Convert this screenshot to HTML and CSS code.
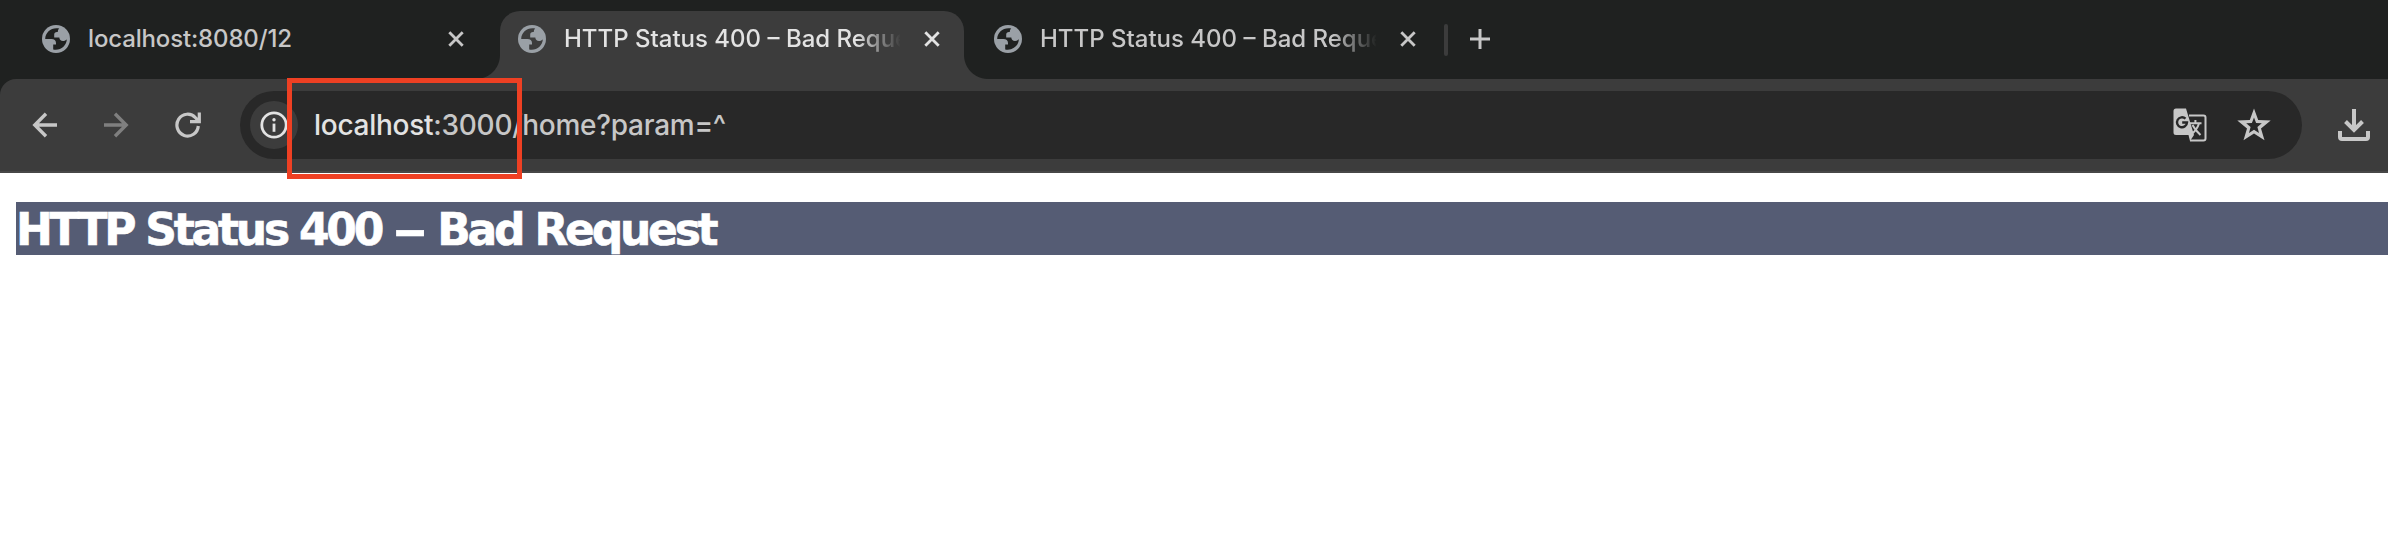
FILE: index.html
```html
<!DOCTYPE html>
<html lang="en">
<head>
<meta charset="utf-8">
<title>HTTP Status 400 – Bad Request</title>
<link rel="stylesheet" href="styles.css">
</head>
<body>
<svg class="defs" width="0" height="0">
  <symbol id="globe" viewBox="0 0 28 28">
    <circle cx="14" cy="14" r="14" fill="#9aa0a6"/>
    <path class="land" d="M14.5 3.2C8.300 3.200 3.300 7.800 3.200 14H9.500C12.200 14 14 15.500 14 18V19.500H11.200V24.400C18 26 24.800 20.800 24.800 14.200C23.900 15.400 22.500 16 21 16C18.800 16 17.500 14.800 17.300 12.600H12.200V9.800C12.200 8 13.200 7 15 7H15.800C15.800 5.600 16.200 4.400 17.200 3.600C16.400 3.300 15.400 3.200 14.500 3.200Z"/>
  </symbol>
  <symbol id="close" viewBox="0 0 16 16"><path d="M1.300 1.300L14.700 14.700M14.700 1.300L1.300 14.700" fill="none" stroke="currentColor" stroke-width="2.800"/></symbol>
</svg>
<div class="chrome">
<header class="tabs">
  <div class="tab first">
    <svg class="globe"><use href="#globe"/></svg>
    <span class="title">localhost:8080/12</span>
    <svg class="close"><use href="#close"/></svg>
  </div>
  <div class="tab active">
    <svg class="globe"><use href="#globe"/></svg>
    <span class="title fade">HTTP Status 400 – Bad Request</span>
    <svg class="close"><use href="#close"/></svg>
  </div>
  <div class="tab last">
    <svg class="globe"><use href="#globe"/></svg>
    <span class="title fade">HTTP Status 400 – Bad Request</span>
    <svg class="close"><use href="#close"/></svg>
  </div>
  <div class="divider"></div>
  <svg class="plus" viewBox="0 0 20 20"><path d="M10 0V20M0 10H20" stroke="currentColor" stroke-width="3"/></svg>
</header>
<nav class="toolbar">
  <svg class="nav-icon" viewBox="0 0 26 26"><path d="M25 13H3M14 1.800L2.800 13L14 24.200" fill="none" stroke="#c7c7c7" stroke-width="3.400"/></svg>
  <svg class="nav-icon forward" viewBox="0 0 26 26"><path d="M1 13H23M12 1.800L23.200 13L12 24.200" fill="none" stroke="#7f7f7f" stroke-width="3.400"/></svg>
  <svg class="nav-icon reload" viewBox="0 0 26 26"><path d="M23.300 14A10.700 10.900 0 1 1 20.500 5.700L23.500 9M24.300 .5V9.700H15" fill="none" stroke="#c7c7c7" stroke-width="3.200"/></svg>
  <div class="omnibox">
    <div class="info">
      <svg viewBox="0 0 28 28"><circle cx="14" cy="14" r="12.200" fill="none" stroke="#e3e3e3" stroke-width="2.800"/><path d="M14 12.600V20.800" stroke="#e3e3e3" stroke-width="2.800"/><circle cx="14" cy="8.700" r="1.700" fill="#e3e3e3"/></svg>
    </div>
    <div class="url"><span class="host">localhost</span>:3000/home?param=^</div>
    <svg class="translate" viewBox="0 0 34 34">
      <path d="M16 7.500H30.500Q32.500 7.500 32.500 9.500V30.500Q32.500 32.500 30.500 32.500H17" fill="none" stroke="#c7c7c7" stroke-width="2"/>
      <path d="M3 .5H13L21 27L17 33L15.500 27H3Q.5 27 .5 24.500V3Q.5 .5 3 .5Z" fill="#c7c7c7"/>
      <path d="M12.500 10.700A5 5 0 1 0 14 14.500H9.200" fill="none" stroke="#282828" stroke-width="2.400"/>
      <path d="M17 15.300H28.500M22.400 12V15M26 15.500Q24 22 18 26.500M19.500 17Q22 22 27.500 27" fill="none" stroke="#c7c7c7" stroke-width="2"/>
    </svg>
    <svg class="star" viewBox="0 0 34 34"><path fill-rule="evenodd" fill="#c7c7c7" d="M17 .5L21.200 12L33.700 12.500L24 20.500L27.500 32.300L17 25.500L6.500 32.300L10 20.500L.3 12.500L12.800 12ZM17 9.500L14.900 15L9.200 15.300L13.600 19L12 25L17 21.800L22 25L20.400 19L24.800 15.300L19.100 15Z"/></svg>
  </div>
  <svg class="download" viewBox="0 0 32 32"><path d="M16 0V20.500M7.500 12.500L16 21L24.500 12.500M2 22V28Q2 30 4 30H28Q30 30 30 28V22" fill="none" stroke="#c7c7c7" stroke-width="4"/></svg>
</nav>
</div>
<main class="page"><h1>HTTP Status 400 <span class="dash">–</span> Bad Request</h1></main>
<div class="highlight"></div>
</body>
</html>
```
FILE: styles.css
```css
* { box-sizing: border-box; }
body { margin: 0; width: 2388px; height: 556px; overflow: hidden; background: #fff; font-family: Inter, "Liberation Sans", sans-serif; }
svg { display: block; flex: none; }
.defs { position: absolute; }
.chrome { background: linear-gradient(#1f2120 120px, #3c3c3c 120px); }
.tabs { height: 79px; display: flex; align-items: flex-start; color: #c7c7c7; }
.tab { display: flex; align-items: center; height: 68px; margin-top: 11px; padding-bottom: 12px; }
.first { width: 500px; padding-left: 42px; }
.active { position: relative; width: 464px; padding-left: 18px; background: #3c3c3c; color: #e3e3e3; border-radius: 20px 20px 0 0; }
.active::before, .active::after { content: ""; position: absolute; bottom: 0; width: 24px; height: 24px; }
.active::before { right: 100%; background: radial-gradient(circle at 0 0, transparent 23.500px, #3c3c3c 24.500px); }
.active::after { left: 100%; background: radial-gradient(circle at 100% 0, transparent 23.500px, #3c3c3c 24.500px); }
.last { width: 480px; padding-left: 30px; }
.globe { width: 28px; height: 28px; }
.active .globe { --land: #3c3c3c; }
.land { fill: var(--land, #1f2120); }
.title { width: 336px; margin-left: 18px; font-size: 24px; font-weight: 450; line-height: 30px; white-space: nowrap; overflow: hidden; }
.first .title { letter-spacing: -.150px; }
.fade { -webkit-mask-image: linear-gradient(90deg, #000 292px, transparent 337px); mask-image: linear-gradient(90deg, #000 292px, transparent 337px); }
.close { width: 16px; height: 16px; margin-left: 24px; }
.divider { width: 4px; height: 32px; margin-top: 24px; border-radius: 2px; background: #3c3c3c; }
.plus { width: 20px; height: 20px; margin: 29px 0 0 22px; }
.toolbar { height: 94px; display: flex; align-items: center; padding: 0 18px 0 32px; background: #3c3c3c; border-bottom: 2px solid #474747; border-top-left-radius: 16px; }
.nav-icon { width: 26px; height: 26px; }
.forward { margin-left: 45px; }
.reload { margin-left: 46px; }
.omnibox { display: flex; align-items: center; width: 2062px; height: 68px; margin-left: 39px; padding: 0 31px 0 10px; border-radius: 34px; background: #282828; }
.info { display: grid; place-items: center; width: 48px; height: 48px; border-radius: 50%; background: #3c3c3c; }
.info svg { width: 28px; height: 28px; }
.url { flex: 1; margin-left: 16px; font-size: 28px; font-weight: 450; letter-spacing: -.270px; color: #c7c7c7; white-space: nowrap; }
.host { color: #e3e3e3; }
.translate { width: 34px; height: 34px; margin-right: 30px; }
.star { width: 34px; height: 34px; }
.download { width: 32px; height: 32px; margin-left: 36px; }
.page { padding: 29px 0 0 16px; }
h1 { margin: 0; height: 53px; background: #555c74; color: #fff; font: bold 44px/55px "DejaVu Sans", sans-serif; letter-spacing: -3.230px; -webkit-text-stroke: .6px #fff; white-space: nowrap; }
.dash { display: inline-block; width: 32px; letter-spacing: 0; transform: scaleX(1.550); transform-origin: left; }
.highlight { position: absolute; left: 287px; top: 78px; width: 235px; height: 101px; border: 5px solid #ee4023; }
```
